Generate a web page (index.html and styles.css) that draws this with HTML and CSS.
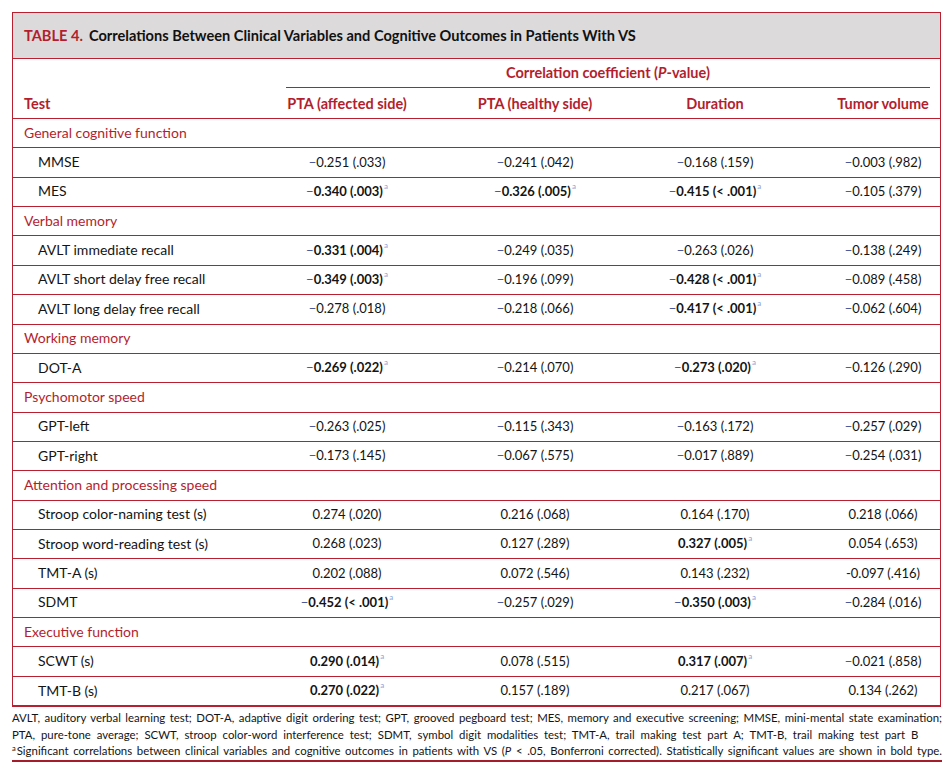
FILE: index.html
```html
<!DOCTYPE html>
<html>
<head>
<meta charset="utf-8">
<link rel="stylesheet" href="styles.css">
</head>
<body>
<div class="page">
  <div class="box">
    <div class="caption"><span class="tno">TABLE 4.</span> Correlations Between Clinical Variables and Cognitive Outcomes in Patients With VS</div>
    <div class="head">
      <div class="grp"><span class="grp-in">Correlation coefficient (<i>P</i>-value)</span></div>
      <div class="hrow">
        <div class="c0">Test</div>
        <div class="c">PTA (affected side)</div>
        <div class="c">PTA (healthy side)</div>
        <div class="c">Duration</div>
        <div class="c c4">Tumor volume</div>
      </div>
    </div>
    <div class="row sec"><div class="c0">General cognitive function</div></div>
    <div class="row"><div class="c0 sub">MMSE</div><div class="c"><span class="m">−</span>0.251 (.033)</div><div class="c"><span class="m">−</span>0.241 (.042)</div><div class="c"><span class="m">−</span>0.168 (.159)</div><div class="c c4"><span class="m">−</span>0.003 (.982)</div></div>
    <div class="row"><div class="c0 sub">MES</div><div class="c"><span class="m">−</span><b>0.340 (.003)</b><sup>a</sup></div><div class="c"><span class="m">−</span><b>0.326 (.005)</b><sup>a</sup></div><div class="c"><span class="m">−</span><b>0.415 (&lt; .001)</b><sup>a</sup></div><div class="c c4"><span class="m">−</span>0.105 (.379)</div></div>
    <div class="row sec"><div class="c0">Verbal memory</div></div>
    <div class="row"><div class="c0 sub">AVLT immediate recall</div><div class="c"><span class="m">−</span><b>0.331 (.004)</b><sup>a</sup></div><div class="c"><span class="m">−</span>0.249 (.035)</div><div class="c"><span class="m">−</span>0.263 (.026)</div><div class="c c4"><span class="m">−</span>0.138 (.249)</div></div>
    <div class="row"><div class="c0 sub">AVLT short delay free recall</div><div class="c"><span class="m">−</span><b>0.349 (.003)</b><sup>a</sup></div><div class="c"><span class="m">−</span>0.196 (.099)</div><div class="c"><span class="m">−</span><b>0.428 (&lt; .001)</b><sup>a</sup></div><div class="c c4"><span class="m">−</span>0.089 (.458)</div></div>
    <div class="row"><div class="c0 sub">AVLT long delay free recall</div><div class="c"><span class="m">−</span>0.278 (.018)</div><div class="c"><span class="m">−</span>0.218 (.066)</div><div class="c"><span class="m">−</span><b>0.417 (&lt; .001)</b><sup>a</sup></div><div class="c c4"><span class="m">−</span>0.062 (.604)</div></div>
    <div class="row sec"><div class="c0">Working memory</div></div>
    <div class="row"><div class="c0 sub">DOT-A</div><div class="c"><span class="m">−</span><b>0.269 (.022)</b><sup>a</sup></div><div class="c"><span class="m">−</span>0.214 (.070)</div><div class="c"><span class="m">−</span><b>0.273 (.020)</b><sup>a</sup></div><div class="c c4"><span class="m">−</span>0.126 (.290)</div></div>
    <div class="row sec"><div class="c0">Psychomotor speed</div></div>
    <div class="row"><div class="c0 sub">GPT-left</div><div class="c"><span class="m">−</span>0.263 (.025)</div><div class="c"><span class="m">−</span>0.115 (.343)</div><div class="c"><span class="m">−</span>0.163 (.172)</div><div class="c c4"><span class="m">−</span>0.257 (.029)</div></div>
    <div class="row"><div class="c0 sub">GPT-right</div><div class="c"><span class="m">−</span>0.173 (.145)</div><div class="c"><span class="m">−</span>0.067 (.575)</div><div class="c"><span class="m">−</span>0.017 (.889)</div><div class="c c4"><span class="m">−</span>0.254 (.031)</div></div>
    <div class="row sec"><div class="c0">Attention and processing speed</div></div>
    <div class="row"><div class="c0 sub">Stroop color-naming test (s)</div><div class="c">0.274 (.020)</div><div class="c">0.216 (.068)</div><div class="c">0.164 (.170)</div><div class="c c4">0.218 (.066)</div></div>
    <div class="row"><div class="c0 sub">Stroop word-reading test (s)</div><div class="c">0.268 (.023)</div><div class="c">0.127 (.289)</div><div class="c"><b>0.327 (.005)</b><sup>a</sup></div><div class="c c4">0.054 (.653)</div></div>
    <div class="row"><div class="c0 sub">TMT-A (s)</div><div class="c">0.202 (.088)</div><div class="c">0.072 (.546)</div><div class="c">0.143 (.232)</div><div class="c c4">-0.097 (.416)</div></div>
    <div class="row"><div class="c0 sub">SDMT</div><div class="c"><span class="m">−</span><b>0.452 (&lt; .001)</b><sup>a</sup></div><div class="c"><span class="m">−</span>0.257 (.029)</div><div class="c"><span class="m">−</span><b>0.350 (.003)</b><sup>a</sup></div><div class="c c4"><span class="m">−</span>0.284 (.016)</div></div>
    <div class="row sec"><div class="c0">Executive function</div></div>
    <div class="row"><div class="c0 sub">SCWT (s)</div><div class="c"><b>0.290 (.014)</b><sup>a</sup></div><div class="c">0.078 (.515)</div><div class="c"><b>0.317 (.007)</b><sup>a</sup></div><div class="c c4"><span class="m">−</span>0.021 (.858)</div></div>
    <div class="row last"><div class="c0 sub">TMT-B (s)</div><div class="c"><b>0.270 (.022)</b><sup>a</sup></div><div class="c">0.157 (.189)</div><div class="c">0.217 (.067)</div><div class="c c4">0.134 (.262)</div></div>
  </div>
  <div class="notes">
    <p class="ln j">AVLT, auditory verbal learning test; DOT-A, adaptive digit ordering test; GPT, grooved pegboard test; MES, memory and executive screening; MMSE, mini-mental state examination;</p>
    <p class="ln l2">PTA, pure-tone average; SCWT, stroop color-word interference test; SDMT, symbol digit modalities test; TMT-A, trail making test part A; TMT-B, trail making test part B</p>
    <p class="ln j"><sup>a</sup>Significant correlations between clinical variables and cognitive outcomes in patients with VS (<i>P</i> &lt; .05, Bonferroni corrected). Statistically significant values are shown in bold type.</p>
  </div>
</div>
</body>
</html>
```
FILE: styles.css
```css
html, body {
  margin: 0;
  padding: 0;
  background: #ffffff;
}
body {
  font-family: Lato, "Open Sans", sans-serif;
  font-size: 14px;
  color: #141414;
}
.page {
  padding: 12px 0 0 12px;
  width: 929px;
}
.box {
  border: 1px solid #b8202f;
}
.caption {
  height: 46px;
  box-sizing: border-box;
  background: #dcdadb;
  border-bottom: 1px solid #b8202f;
  padding: 0 0 0 11px;
  display: flex;
  align-items: center;
  font-weight: 700;
  font-size: 14.6px;
  color: #111;
}
.tno {
  color: #b31e2e;
  margin-right: 6px;
}
.head {
  border-bottom: 1px solid #b8202f;
  height: 60px;
  box-sizing: border-box;
  color: #b31e2e;
  font-weight: 700;
  font-size: 14.5px;
}
.grp {
  height: 29px;
  display: flex;
  justify-content: flex-end;
  padding-right: 10px;
}
.grp-in {
  width: 644px;
  box-sizing: border-box;
  border-bottom: 1px solid #b8202f;
  text-align: center;
  line-height: 27px;
}
.hrow, .row {
  display: grid;
  grid-template-columns: 273px 122px 254px 106px 1fr;
  align-items: center;
}
.hrow {
  height: 30px;
}
.row {
  height: 29.36px;
  box-sizing: border-box;
  border-bottom: 1px solid #b8202f;
  padding-bottom: 2px;
}
.c0 {
  padding-left: 11px;
  white-space: nowrap;
}
.c0.sub {
  padding-left: 25px;
}
.sec .c0 {
  color: #b31e2e;
}
.c {
  text-align: center;
  white-space: nowrap;
}
.row .c {
  font-size: 13px;
}
.c4 {
  padding: 0 10px 0 68px;
}
.m {
  color: #4a5a9c;
}
b {
  font-weight: 700;
}
sup {
  font-size: 8px;
  line-height: 1;
  color: #8aa2d8;
  vertical-align: top;
  position: relative;
  top: -1px;
  margin-left: 1px;
}
.notes {
  margin-top: 3px;
  font-size: 11.4px;
  border-bottom: 2px solid #a31d2b;
  padding-bottom: 0;
  width: 930px;
}
.ln {
  margin: 0;
  line-height: 16.5px;
  white-space: nowrap;
}
.j {
  text-align: justify;
  text-align-last: justify;
  white-space: normal;
}
.l2 {
  word-spacing: 3px;
}
.notes sup {
  font-size: 7.5px;
  color: #111;
  top: 2px;
  margin: 0 1px 0 0;
}
```
